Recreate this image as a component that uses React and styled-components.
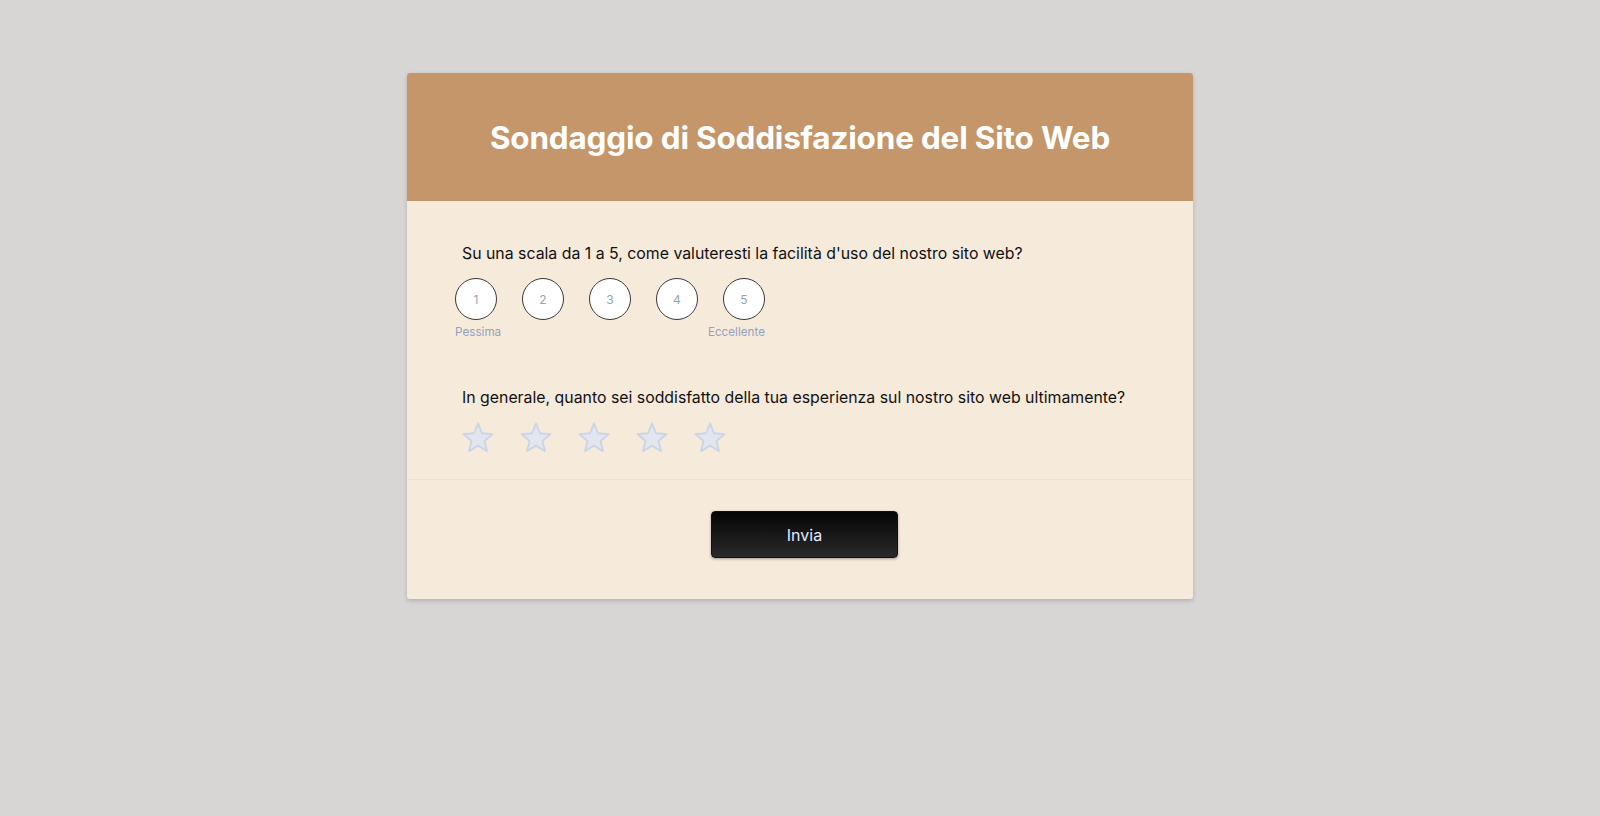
import React, { useState } from "react";
import styled, { createGlobalStyle } from "styled-components";

const GlobalStyle = createGlobalStyle`
  html, body {
    margin: 0;
    padding: 0;
    background: #d7d6d4;
    font-family: Inter, "Noto Sans", "Liberation Sans", sans-serif;
  }
`;

const Page = styled.div`
  min-height: 816px;
  padding-top: 73px;
  box-sizing: border-box;
`;

const Card = styled.div`
  width: 786px;
  margin: 0 auto;
  background: #f6eadb;
  border-radius: 3px;
  overflow: hidden;
  box-shadow: 0 2px 4px rgba(60, 50, 70, 0.22);
`;

const Header = styled.header`
  height: 128px;
  background: #c49669;
  display: flex;
  align-items: center;
  justify-content: center;
`;

const Title = styled.h1`
  margin: 0;
  color: #ffffff;
  font-size: 31.5px;
  font-weight: 700;
  letter-spacing: -0.2px;
`;

const Body = styled.div`
  padding: 41px 48px 24px;
`;

const Question = styled.p`
  margin: 0;
  padding-left: 7px;
  font-size: 15.85px;
  line-height: 24px;
  color: #111111;
`;

const Scale = styled.div`
  display: inline-flex;
  flex-direction: column;
  margin-top: 12px;
`;

const Circles = styled.div`
  display: flex;
  gap: 25px;
`;

const Circle = styled.button`
  width: 42px;
  height: 42px;
  border-radius: 50%;
  border: 1px solid #3a3a3a;
  background: ${(p) => (p.$active ? "#c49669" : "#ffffff")};
  color: ${(p) => (p.$active ? "#ffffff" : "#94a3b8")};
  font-family: inherit;
  font-size: 12px;
  padding: 0;
  cursor: pointer;
`;

const ScaleLabels = styled.div`
  display: flex;
  justify-content: space-between;
  margin-top: 4px;
  font-size: 11.7px;
  line-height: 16px;
  color: #94a3b8;
`;

const Section = styled.div`
  margin-top: ${(p) => p.$top || 0}px;
`;

const Stars = styled.div`
  display: flex;
  gap: 24px;
  margin-top: 11px;
  padding-left: 6px;
`;

const StarButton = styled.button`
  width: 34px;
  height: 34px;
  padding: 0;
  border: none;
  background: none;
  cursor: pointer;
  display: block;

  svg {
    display: block;
  }
`;

const Footer = styled.div`
  border-top: 1px solid #efe2d2;
  padding: 31px 0 41px;
  display: flex;
  justify-content: center;
`;

const Submit = styled.button`
  width: 187px;
  height: 47px;
  margin-left: 9px;
  border: 1px solid #111;
  border-radius: 4px;
  background: linear-gradient(to bottom, #050505, #2a2a2a);
  box-shadow: 0 1px 3px rgba(0, 0, 0, 0.35);
  color: #e3e9ff;
  font-family: inherit;
  font-size: 16px;
  font-weight: 400;
  cursor: pointer;
`;

// five-point star, inner radius ~0.45 of outer for a rounder look
const starPoints =
  "12,1.8 14.86,8.66 22.27,9.25 16.63,14.09 18.34,21.3 12,17.4 5.66,21.3 7.37,14.09 1.73,9.25 9.14,8.66";

function Star({ filled }) {
  return (
    <svg width="34" height="34" viewBox="0 0 24 24">
      <polygon
        points={starPoints}
        fill={filled ? "#f5b83d" : "#e2e6f0"}
        stroke={filled ? "#e0a020" : "#cbd4e3"}
        strokeWidth="1.3"
        strokeLinejoin="round"
      />
    </svg>
  );
}

export default function App() {
  const [score, setScore] = useState(null);
  const [stars, setStars] = useState(0);

  return (
    <>
      <GlobalStyle />
      <Page>
        <Card>
          <Header>
            <Title>Sondaggio di Soddisfazione del Sito Web</Title>
          </Header>
          <Body>
            <Question>
              Su una scala da 1 a 5, come valuteresti la facilità d'uso del
              nostro sito web?
            </Question>
            <Scale>
              <Circles>
                {[1, 2, 3, 4, 5].map((n) => (
                  <Circle key={n} $active={score === n} onClick={() => setScore(n)}>
                    {n}
                  </Circle>
                ))}
              </Circles>
              <ScaleLabels>
                <span>Pessima</span>
                <span>Eccellente</span>
              </ScaleLabels>
            </Scale>
            <Section $top={46}>
              <Question>
                In generale, quanto sei soddisfatto della tua esperienza sul
                nostro sito web ultimamente?
              </Question>
              <Stars>
                {[1, 2, 3, 4, 5].map((n) => (
                  <StarButton key={n} onClick={() => setStars(n)}>
                    <Star filled={n <= stars} />
                  </StarButton>
                ))}
              </Stars>
            </Section>
          </Body>
          <Footer>
            <Submit>Invia</Submit>
          </Footer>
        </Card>
      </Page>
    </>
  );
}
